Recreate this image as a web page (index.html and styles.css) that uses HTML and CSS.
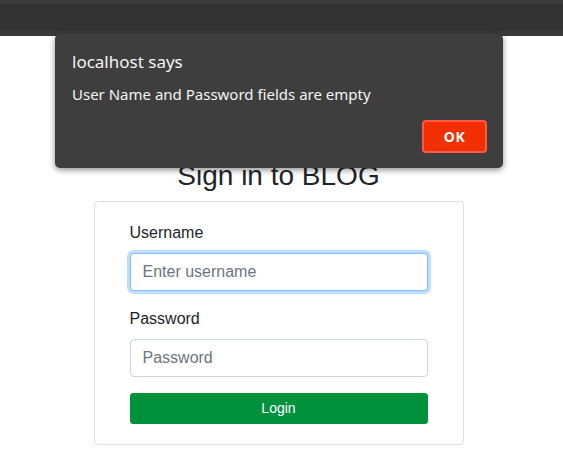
FILE: index.html
```html
<!DOCTYPE html>
<html lang="en">
<head>
<meta charset="utf-8">
<title>Sign in to BLOG</title>
<link rel="stylesheet" href="styles.css">
</head>
<body>
  <div class="topbar"></div>
  <main class="main">
    <h3 class="title">Sign in to BLOG</h3>
    <form class="card">
      <div class="group">
        <label class="label" for="u">Username</label>
        <input class="input input-focus" id="u" type="text" placeholder="Enter username">
      </div>
      <div class="group">
        <label class="label" for="p">Password</label>
        <input class="input" id="p" type="password" placeholder="Password">
      </div>
      <button class="btn" type="button">Login</button>
    </form>
  </main>
  <div class="dialog">
    <div class="dialog-title">localhost says</div>
    <div class="dialog-msg">User Name and Password fields are empty</div>
    <div class="dialog-actions">
      <button class="dialog-ok" type="button">OK</button>
    </div>
  </div>
</body>
</html>
```
FILE: styles.css
```css
* { box-sizing: border-box; }
html, body { margin: 0; padding: 0; }
body {
  background: #fff;
  font-family: "Liberation Sans", Arial, sans-serif;
  color: #212529;
  overflow: hidden;
  height: 454px;
  position: relative;
}
.topbar {
  height: 36px;
  background: #333333;
  border-top: 4px solid #3c3c3c;
  border-bottom: 5px solid #3a3a3a;
}
.main {
  display: flex;
  flex-direction: column;
  align-items: center;
  padding-top: 123px;
  padding-right: 6px;
}
.title {
  margin: 0 0 8px;
  font-size: 28px;
  font-weight: 400;
  line-height: 1.2;
  color: #212529;
}
.card {
  width: 370px;
  border: 1px solid rgba(0,0,0,.125);
  border-radius: 4px;
  padding: 19px 35px 20px;
  margin: 0;
}
.group { margin-bottom: 16px; }
.label {
  display: block;
  font-size: 16px;
  line-height: 24px;
  margin-bottom: 8px;
  color: #212529;
}
.input {
  display: block;
  width: 100%;
  height: 38px;
  padding: 6px 12px;
  font-family: "Liberation Sans", Arial, sans-serif;
  font-size: 16px;
  line-height: 24px;
  color: #495057;
  background: #fff;
  border: 1px solid #ced4da;
  border-radius: 4px;
  outline: none;
}
.input::placeholder { color: #6c757d; }
.input-focus {
  border-color: #80bdff;
  box-shadow: 0 0 0 3px rgba(0,123,255,.25);
}
.btn {
  display: block;
  width: 100%;
  height: 31px;
  padding: 4px 8px;
  font-family: "Liberation Sans", Arial, sans-serif;
  font-size: 14px;
  line-height: 21px;
  color: #fff;
  background: #00913d;
  border: 1px solid #00913d;
  border-radius: 3px;
}
.dialog {
  position: absolute;
  left: 55px;
  top: 34px;
  width: 448px;
  height: 134px;
  background: #3e3e3e;
  border-radius: 5px;
  box-shadow: 0 2px 6px rgba(0,0,0,.45);
  padding: 16px 16px 15px 17px;
  display: flex;
  flex-direction: column;
  font-family: "Noto Sans", "Open Sans", sans-serif;
  color: #f4f4f4;
}
.dialog-title {
  font-size: 17px;
  line-height: 24px;
  margin-bottom: 9px;
}
.dialog-msg {
  font-size: 15px;
  line-height: 22px;
}
.dialog-actions {
  margin-top: auto;
  display: flex;
  justify-content: flex-end;
}
.dialog-ok {
  width: 65px;
  height: 33px;
  background: #f22f00;
  border: 2px solid #ff5a48;
  border-radius: 4px;
  color: #fff;
  font-family: "Noto Sans", "Open Sans", sans-serif;
  font-weight: 700;
  font-size: 14px;
  letter-spacing: .5px;
  padding: 0;
}
```
